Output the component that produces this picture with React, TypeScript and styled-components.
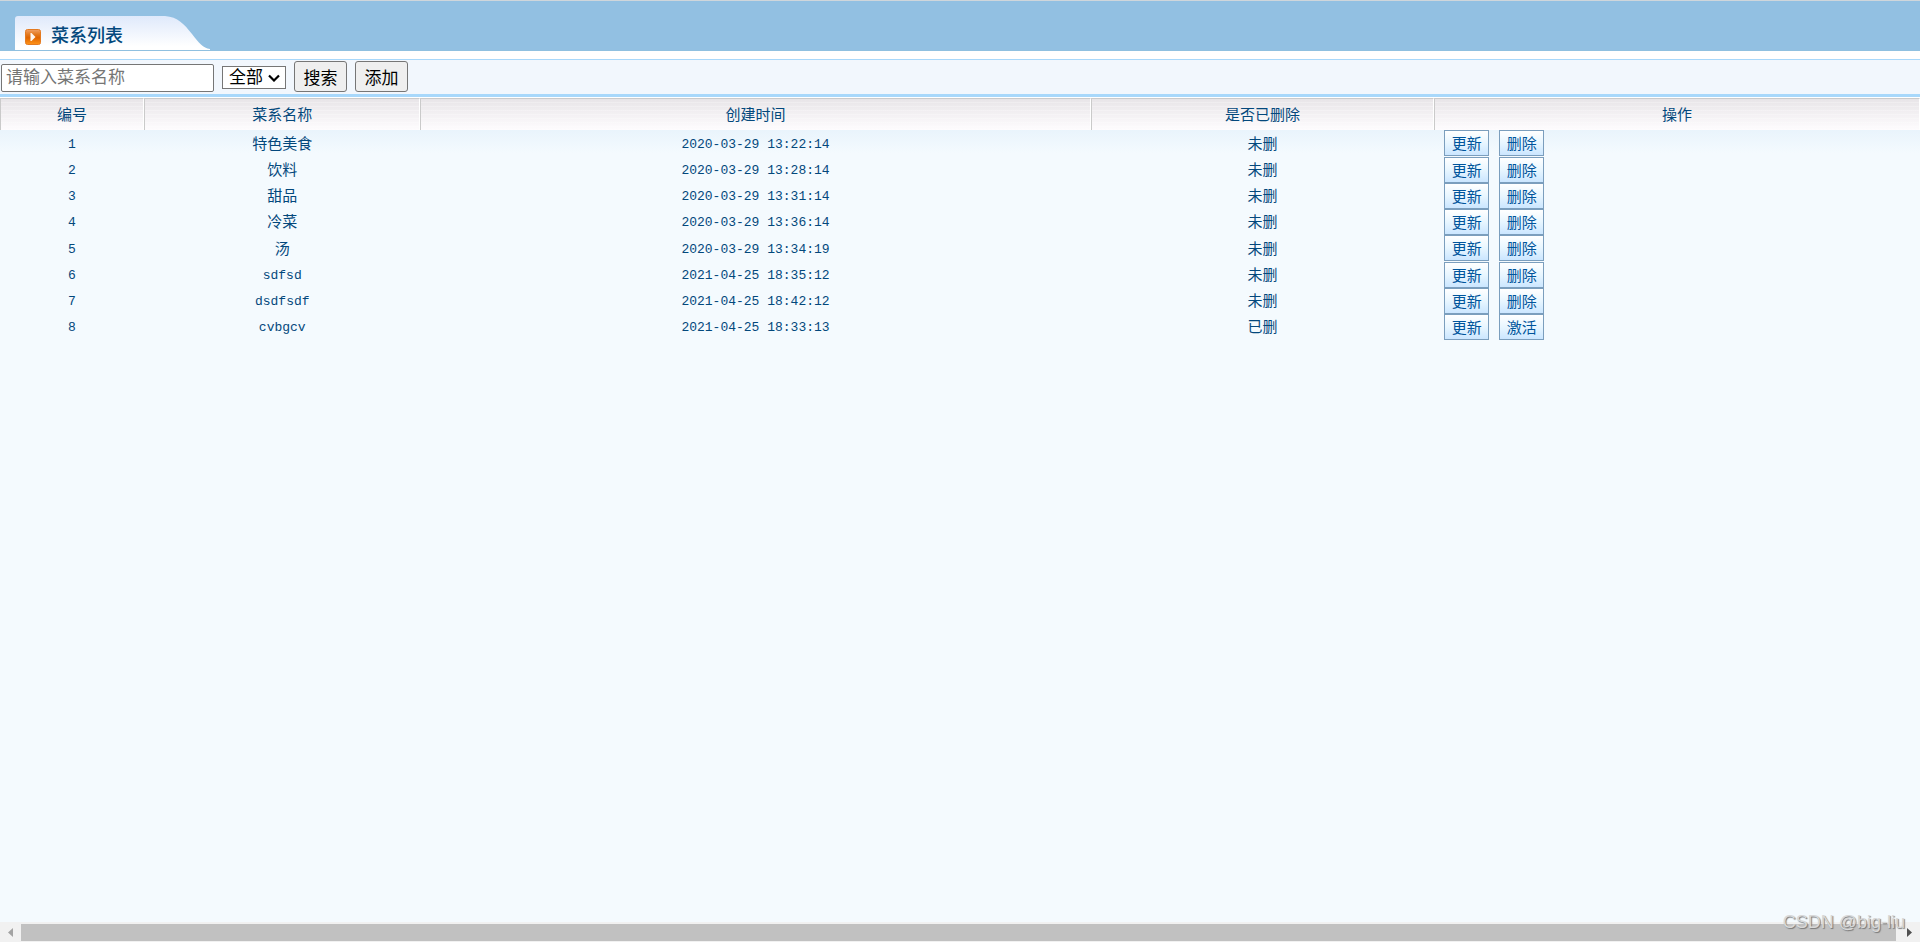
import React from "react";
import styled, { createGlobalStyle } from "styled-components";

const GlobalStyle = createGlobalStyle`
  *, *::before, *::after { box-sizing: border-box; }
  body {
    margin: 0;
    background: #f4fafe;
    color: #03487c;
    font-family: "Liberation Sans", "Noto Sans CJK SC", sans-serif;
  }
`;

const Page = styled.div`
  display: flex;
  flex-direction: column;
  min-height: 100vh;
`;

const TitleBar = styled.header`
  display: flex;
  align-items: flex-end;
  height: 51px;
  padding-left: 15px;
  background: #92c0e2;
  border-top: 1px solid #cfd6db;
  border-bottom: 1px solid #8fc0e0;
`;

const Tab = styled.div`
  display: grid;
  width: 195px;
  height: 34px;
  > * { grid-area: 1 / 1; }
`;

const TabShape = styled.svg`
  display: block;
`;

const TabLabel = styled.div`
  display: flex;
  align-items: center;
  gap: 10px;
  padding: 7px 0 0 10px;
  z-index: 1;
`;

const Title = styled.h1`
  margin: 0;
  padding-bottom: 2px;
  font-size: 18px;
  line-height: 24px;
  font-weight: 500;
`;

const ToolbarFrame = styled.div`
  padding-top: 8px;
  background: #fff;
`;

const Toolbar = styled.form`
  display: flex;
  align-items: flex-end;
  gap: 8px;
  height: 38px;
  padding: 0 1px 2px;
  background: #f2f7fd;
  border-top: 1px solid #a8d8fb;
  border-bottom: 3px solid #a8d8fb;
`;

const SearchInput = styled.input`
  width: 213px;
  height: 28px;
  padding: 0 4px;
  border: 1px solid #767676;
  border-radius: 2px;
  background: #fff;
  font: 17px "Liberation Sans", "Noto Sans CJK SC", sans-serif;
  &::placeholder { color: #757575; }
`;

const SelectWrap = styled.span`
  display: grid;
  align-items: center;
  padding-bottom: 3px;
  > * { grid-area: 1 / 1; }
`;

const StatusSelect = styled.select`
  appearance: none;
  width: 64px;
  height: 23px;
  padding: 0 6px;
  border: 1px solid #767676;
  border-radius: 0;
  background: #fff;
  color: #000;
  font: 17px/20px "Liberation Sans", "Noto Sans CJK SC", sans-serif;
`;

const Chevron = styled.svg`
  justify-self: end;
  margin-right: 6px;
  pointer-events: none;
`;

const ToolButton = styled.button`
  width: 53px;
  height: 31px;
  padding: 0;
  border: 1px solid #767676;
  border-radius: 3px;
  background: #efefef;
  color: #000;
  font: 17px "Liberation Sans", "Noto Sans CJK SC", sans-serif;
`;

const Main = styled.main`
  flex: 1;
  padding-top: 1px;
  background: linear-gradient(#fff 1px, #e9f4fc 33px, #f4fafe 56px);
`;

const Table = styled.table`
  width: 100%;
  table-layout: fixed;
  border-collapse: separate;
  border-spacing: 0;
`;

const HeadCell = styled.th`
  height: 32px;
  padding: 0;
  border-top: 1px solid #cacaca;
  border-left: 1px solid #cacaca;
  border-right: 1px solid #fff;
  background:
    repeating-linear-gradient(transparent 0 3px, rgba(255, 255, 255, 0.25) 3px 4px),
    linear-gradient(#e8e5e8, #fefcfe);
  font-size: 15px;
  line-height: 20px;
  font-weight: 400;
`;

const Row = styled.tr`
  height: 26px;
  &:nth-child(4n + 1) { height: 27px; }
`;

const Cell = styled.td<{ $mono?: boolean }>`
  padding: ${(p) => (p.$mono ? "2px 0 0" : "0 0 2px")};
  text-align: center;
  font-family: ${(p) => (p.$mono ? '"Liberation Mono", ' : "")}"Noto Sans CJK SC", sans-serif;
  font-size: ${(p) => (p.$mono ? 13 : 15)}px;
  line-height: 20px;
`;

const ActionCell = styled.td`
  padding: 0 0 0 10px;
  vertical-align: top;
`;

const Actions = styled.div`
  display: flex;
  gap: 10px;
  height: 26px;
`;

const RowButton = styled.button`
  width: 45px;
  padding: 0;
  border: 1px solid #7b9ebd;
  background: linear-gradient(#fff, #e8f6ff 50%, #cbe6ff);
  color: #00559c;
  font: 15px/20px "Noto Sans CJK SC", sans-serif;
`;

const ScrollTrack = styled.footer`
  display: flex;
  align-items: center;
  height: 20px;
  background: #f1f1f1;
  position: relative;
`;

const ScrollArrow = styled.svg`
  flex: none;
`;

const ScrollThumb = styled.div`
  flex: 1;
  height: 17px;
  margin-top: 1px;
  background: #c1c1c1;
`;

const Watermark = styled.span`
  position: absolute;
  right: 15px;
  bottom: 10px;
  color: #d8d8d8;
  font-size: 18px;
  line-height: 20px;
  text-shadow: 1px 1px 1px #777;
`;

const columns = [
  { label: "编号", width: "7.5%" },
  { label: "菜系名称", width: "14.4%" },
  { label: "创建时间", width: "34.9%" },
  { label: "是否已删除", width: "17.9%" },
  { label: "操作", width: "25.3%" },
];

const cuisines = [
  { id: 1, name: "特色美食", created: "2020-03-29 13:22:14", deleted: false },
  { id: 2, name: "饮料", created: "2020-03-29 13:28:14", deleted: false },
  { id: 3, name: "甜品", created: "2020-03-29 13:31:14", deleted: false },
  { id: 4, name: "冷菜", created: "2020-03-29 13:36:14", deleted: false },
  { id: 5, name: "汤", created: "2020-03-29 13:34:19", deleted: false },
  { id: 6, name: "sdfsd", created: "2021-04-25 18:35:12", deleted: false },
  { id: 7, name: "dsdfsdf", created: "2021-04-25 18:42:12", deleted: false },
  { id: 8, name: "cvbgcv", created: "2021-04-25 18:33:13", deleted: true },
];

const isLatin = (text: string) => /^[\x20-\x7e]+$/.test(text);

function TabIcon() {
  return (
    <svg width="16" height="16" viewBox="0 0 16 16" aria-hidden="true">
      <defs>
        <linearGradient id="orange" x1="0" y1="0" x2="0" y2="1">
          <stop offset="0" stopColor="#f0a066" />
          <stop offset="0.35" stopColor="#e2771c" />
          <stop offset="0.55" stopColor="#e06400" />
          <stop offset="1" stopColor="#ff9418" />
        </linearGradient>
      </defs>
      <rect x="0.5" y="0.5" width="15" height="15" rx="2" fill="url(#orange)" stroke="#e47a20" />
      <path d="M5.5 4 H6.5 L10.5 8 L6.5 12 H5.5 Z" fill="#fff" fillOpacity="0.95" />
    </svg>
  );
}

export default function App() {
  return (
    <Page>
      <GlobalStyle />
      <TitleBar>
        <Tab>
          <TabShape width="195" height="34" viewBox="0 0 195 34" aria-hidden="true">
            <defs>
              <linearGradient id="tab" x1="0" y1="0" x2="0" y2="1">
                <stop offset="0" stopColor="#dfe9fb" />
                <stop offset="0.9" stopColor="#ffffff" />
              </linearGradient>
            </defs>
            <path
              d="M0 34 V3 Q0 0 3 0 H150 C163 1 169 8 177 18 C184 27 188 32 195 33 V34 Z"
              fill="url(#tab)"
            />
          </TabShape>
          <TabLabel>
            <TabIcon />
            <Title>菜系列表</Title>
          </TabLabel>
        </Tab>
      </TitleBar>
      <ToolbarFrame>
        <Toolbar onSubmit={(e) => e.preventDefault()}>
          <SearchInput type="text" placeholder="请输入菜系名称" aria-label="菜系名称" />
          <SelectWrap>
            <StatusSelect aria-label="状态">
              <option>全部</option>
              <option>未删</option>
              <option>已删</option>
            </StatusSelect>
            <Chevron width="12" height="8" viewBox="0 0 12 8" aria-hidden="true">
              <path d="M1 1.5 L6 6.5 L11 1.5" fill="none" stroke="#000" strokeWidth="2.2" />
            </Chevron>
          </SelectWrap>
          <ToolButton type="submit">搜索</ToolButton>
          <ToolButton type="button">添加</ToolButton>
        </Toolbar>
      </ToolbarFrame>
      <Main>
        <Table>
          <colgroup>
            {columns.map((c) => (
              <col key={c.label} width={c.width} />
            ))}
          </colgroup>
          <thead>
            <tr>
              {columns.map((c) => (
                <HeadCell key={c.label} scope="col">{c.label}</HeadCell>
              ))}
            </tr>
          </thead>
          <tbody>
            {cuisines.map((c) => (
              <Row key={c.id}>
                <Cell $mono>{c.id}</Cell>
                <Cell $mono={isLatin(c.name)}>{c.name}</Cell>
                <Cell $mono>{c.created}</Cell>
                <Cell>{c.deleted ? "已删" : "未删"}</Cell>
                <ActionCell>
                  <Actions>
                    <RowButton type="button">更新</RowButton>
                    <RowButton type="button">{c.deleted ? "激活" : "删除"}</RowButton>
                  </Actions>
                </ActionCell>
              </Row>
            ))}
          </tbody>
        </Table>
      </Main>
      <ScrollTrack>
        <ScrollArrow width="21" height="20" viewBox="0 0 21 20" aria-hidden="true">
          <path d="M13 6 V15 L8 10.5 Z" fill="#a3a3a3" />
        </ScrollArrow>
        <ScrollThumb />
        <ScrollArrow width="24" height="20" viewBox="0 0 24 20" aria-hidden="true">
          <path d="M11 6 V15 L16 10.5 Z" fill="#505050" />
        </ScrollArrow>
        <Watermark>CSDN @big-liu</Watermark>
      </ScrollTrack>
    </Page>
  );
}
